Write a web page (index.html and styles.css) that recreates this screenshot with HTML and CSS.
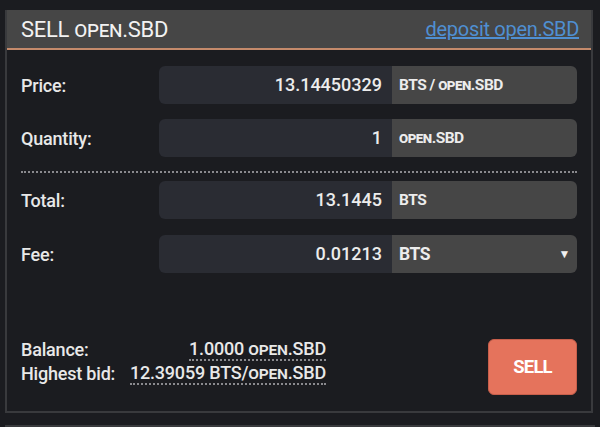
FILE: index.html
```html
<!DOCTYPE html>
<html>
<head>
<meta charset="utf-8">
<link rel="stylesheet" href="styles.css">
</head>
<body>
<div class="panel">
  <div class="header">
    <div class="title">SELL <span class="sc">open</span>.SBD</div>
    <a class="deposit" href="#">deposit open.SBD</a>
  </div>
  <div class="body">
    <div class="row">
      <div class="label">Price:</div>
      <div class="field">
        <div class="num">13.14450329</div>
        <div class="unit">BTS / <span class="sc">open</span>.SBD</div>
      </div>
    </div>
    <div class="row">
      <div class="label">Quantity:</div>
      <div class="field">
        <div class="num">1</div>
        <div class="unit"><span class="sc">open</span>.SBD</div>
      </div>
    </div>
    <div class="divider"></div>
    <div class="row tight">
      <div class="label">Total:</div>
      <div class="field">
        <div class="num">13.1445</div>
        <div class="unit">BTS</div>
      </div>
    </div>
    <div class="row">
      <div class="label">Fee:</div>
      <div class="field">
        <div class="num">0.01213</div>
        <div class="unit select"><span class="big">BTS</span><span class="arrow">▼</span></div>
      </div>
    </div>
    <div class="footer">
      <div class="info">
        <div class="line"><span class="k">Balance:</span><span class="v">1.0000 <span class="sc">open</span>.SBD</span></div>
        <div class="line"><span class="k">Highest bid:</span><span class="v">12.39059 BTS/<span class="sc">open</span>.SBD</span></div>
      </div>
      <button class="sell">SELL</button>
    </div>
  </div>
</div>
<div class="next"></div>
</body>
</html>
```

FILE: styles.css
```css
html, body {
  margin: 0;
  padding: 0;
  background: #1b1c20;
  font-family: Roboto, "Liberation Sans", sans-serif;
  color: #e6e6e6;
}
.panel {
  margin: 10px 0 0 5px;
  width: 584px;
  border: 2px solid #393a3d;
  border-top: none;
  background: #1b1c20;
}
.header {
  height: 38px;
  background: #464646;
  border-bottom: 2px solid #c48a6b;
  display: flex;
  align-items: center;
  justify-content: space-between;
  padding: 0 12px 0 14px;
}
.title {
  font-size: 22px;
  color: #f2f2f2;
  letter-spacing: -0.3px;
}
.sc {
  font-variant: small-caps;
  text-transform: lowercase;
}
.deposit {
  color: #4f8fd2;
  font-size: 20px;
  text-decoration: underline;
  letter-spacing: -0.3px;
}
.body {
  padding: 16px 14px 0 14px;
  height: 361px;
  box-sizing: border-box;
  display: flex;
  flex-direction: column;
}
.row {
  display: flex;
  align-items: center;
  height: 38px;
  margin-bottom: 15px;
}
.row.tight { margin-bottom: 16px; }
.label {
  width: 138px;
  font-size: 18px;
  font-weight: 500;
  color: #e8e8e8;
  letter-spacing: -0.2px;
}
.field {
  display: flex;
  width: 418px;
  height: 38px;
  border-radius: 6px;
  overflow: hidden;
}
.num {
  width: 233px;
  background: #2a2c33;
  text-align: right;
  padding-right: 10px;
  box-sizing: border-box;
  line-height: 38px;
  font-size: 18px;
  font-weight: 500;
  color: #ececec;
}
.unit {
  flex: 1;
  background: #464646;
  line-height: 38px;
  padding-left: 7px;
  font-size: 15.5px;
  font-weight: 700;
  color: #ececec;
  letter-spacing: -0.5px;
}
.select {
  display: flex;
  justify-content: space-between;
  padding-right: 7px;
}
.select .big { font-size: 17.5px; }
.arrow { font-size: 12px; color: #f0f0f0; }
.divider {
  height: 0;
  border-top: 2px dotted #8a8a8e;
  margin: -1px 0 8px 0;
  width: 556px;
}
.footer {
  margin-top: 51px;
  display: flex;
  justify-content: space-between;
  align-items: flex-start;
}
.info {
  display: flex;
  flex-direction: column;
  gap: 2px;
  width: 305px;
}
.line {
  display: flex;
  justify-content: space-between;
  font-size: 18px;
  font-weight: 500;
  color: #e8e8e8;
  letter-spacing: -0.2px;
}
.v {
  border-bottom: 2px dotted #8a8a8e;
  line-height: 20px;
}
.sell {
  width: 89px;
  height: 56px;
  background: #e5735c;
  border: 1px solid #c85f4b;
  border-radius: 6px;
  color: #fff;
  font-family: Roboto, "Liberation Sans", sans-serif;
  font-size: 18.5px;
  font-weight: 700;
  letter-spacing: -0.8px;
  cursor: pointer;
}
.next {
  margin: 12px 0 0 5px;
  width: 590px;
  border-top: 2px solid #393a3d;
}
```
